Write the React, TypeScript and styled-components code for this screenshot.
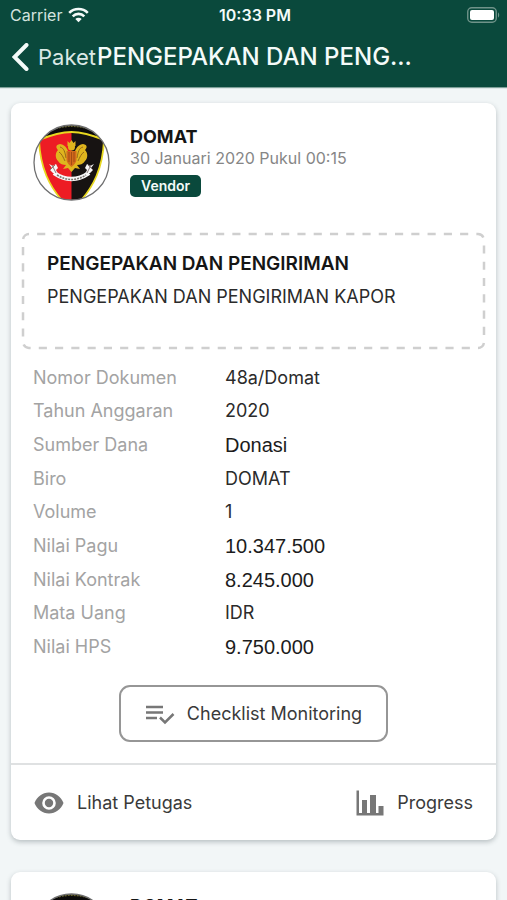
import React from "react";
import styled, { createGlobalStyle } from "styled-components";

const GlobalStyle = createGlobalStyle`
  *, *::before, *::after { box-sizing: border-box; }
  body {
    margin: 0;
    background: #f2f6f7;
    color: #2b2b2b;
    font-family: Inter, "Liberation Sans", sans-serif;
  }
`;

const Screen = styled.div`
  display: flex;
  flex-direction: column;
  height: 100vh;
  overflow: hidden;
`;

const Header = styled.header`
  flex: none;
  background: #0a493c;
  color: #f4fbf9;
  box-shadow: 0 1px 1px rgba(10, 73, 60, 0.5);
`;

const StatusBar = styled.div`
  display: grid;
  grid-template-columns: 1fr auto 1fr;
  align-items: center;
  height: 29px;
  padding: 0 7px 0 10px;
  font-size: 16px;
  line-height: 20px;
`;

const Carrier = styled.span`
  display: flex;
  align-items: center;
  gap: 6px;
  color: #d3e3df;
`;

const Clock = styled.span`
  font-weight: 600;
`;

const BatterySlot = styled.span`
  display: flex;
  justify-content: flex-end;
`;

const NavBar = styled.nav`
  display: flex;
  align-items: center;
  gap: 1px;
  height: 58px;
  padding: 0 12px 2px;
`;

const BackButton = styled.button`
  display: flex;
  align-items: center;
  gap: 9px;
  flex: none;
  padding: 0;
  border: 0;
  background: none;
  color: #dbe9e6;
  font: inherit;
  font-size: 22px;
  line-height: 28px;
  cursor: pointer;
`;

const Title = styled.h1`
  margin: 0;
  min-width: 0;
  overflow: hidden;
  white-space: nowrap;
  font-size: 24px;
  line-height: 30px;
  font-weight: 500;
`;

const Feed = styled.main`
  flex: 1;
  min-height: 0;
  display: flex;
  flex-direction: column;
  gap: 32px;
  padding: 16px 11px;
  overflow-y: auto;
  scrollbar-width: none;
`;

const Card = styled.article`
  flex: none;
  border-radius: 9px;
  background: #fff;
  box-shadow: 0 2px 5px rgba(60, 75, 80, 0.32);
`;

const CardHead = styled.div`
  display: flex;
  gap: 20px;
  padding: 21px 22px 0;
`;

const Identity = styled.div`
  display: flex;
  flex-direction: column;
  align-items: flex-start;
  padding-top: 2px;
`;

const Name = styled.h2`
  margin: 0;
  color: #151515;
  font-size: 18px;
  line-height: 22px;
  font-weight: 700;
`;

const Stamp = styled.time`
  color: #868686;
  font-size: 16px;
  line-height: 20px;
`;

const Badge = styled.span`
  margin-top: 7px;
  padding: 0 11px;
  border-radius: 5px;
  background: #0a493c;
  color: #f4fbf9;
  font-size: 14px;
  line-height: 22px;
  font-weight: 600;
`;

const Summary = styled.section`
  position: relative;
  min-height: 116px;
  margin: 32px 11px 0;
  padding: 19px 25px;
`;

const DashedOutline = styled.svg`
  position: absolute;
  inset: 1px;
  width: calc(100% - 2px);
  height: calc(100% - 2px);
  overflow: visible;
  pointer-events: none;
`;

const SummaryTitle = styled.h3`
  margin: 0 0 9px;
  color: #151515;
  font-size: 19px;
  line-height: 24px;
  font-weight: 600;
`;

const SummaryText = styled.p`
  margin: 0;
  font-size: 18px;
  line-height: 24px;
`;

const Details = styled.table`
  width: 100%;
  height: 303px;
  margin-top: 12px;
  border-collapse: collapse;
  font-size: 18px;
  line-height: 24px;
`;

const Label = styled.th`
  width: 214px;
  padding: 0 0 0 22px;
  color: #a3a3a3;
  font-weight: 400;
  text-align: left;
`;

const Value = styled.td<{ $plain?: boolean }>`
  padding: 0;
  color: ${(p) => (p.$plain ? "#1c1c1c" : "#2b2b2b")};
  font-family: ${(p) => (p.$plain ? '"Liberation Sans", sans-serif' : "inherit")};
  font-size: ${(p) => (p.$plain ? "20px" : "18px")};
`;

const ChecklistButton = styled.button`
  display: flex;
  align-items: center;
  gap: 12px;
  height: 57px;
  margin: 21px auto;
  padding: 0 24px;
  border: 2px solid #969696;
  border-radius: 11px;
  background: #fff;
  color: #3a3a3a;
  font: inherit;
  font-size: 18px;
  line-height: 24px;
  cursor: pointer;
`;

const Actions = styled.footer`
  display: flex;
  justify-content: space-between;
  height: 77px;
  padding: 0 23px;
  border-top: 2px solid #dfe1e2;
`;

const ActionButton = styled.button`
  display: flex;
  align-items: center;
  gap: 13px;
  padding: 0;
  border: 0;
  background: none;
  color: #3a3a3a;
  font: inherit;
  font-size: 18px;
  line-height: 24px;
  cursor: pointer;
`;

const WifiIcon = () => (
  <svg width="21" height="16" viewBox="0 0 21 16" fill="none" stroke="#f4fbf9" strokeWidth="2.6" aria-hidden="true">
    <path d="M1.2 5.8a13.2 13.2 0 0 1 18.6 0" />
    <path d="M4.7 9.3a8.2 8.2 0 0 1 11.6 0" />
    <path d="M10.5 15.2 7.3 12a4.6 4.6 0 0 1 6.4 0z" fill="#f4fbf9" stroke="none" />
  </svg>
);

const BatteryIcon = () => (
  <svg width="33" height="16" viewBox="0 0 33 16" aria-hidden="true">
    <rect x=".75" y=".75" width="28.5" height="14.5" rx="4" fill="none" stroke="#6f9389" strokeWidth="1.4" />
    <rect x="3" y="3" width="24" height="10" rx="2" fill="#fff" />
    <path d="M31 5.5c1.6.6 1.6 4.4 0 5z" fill="#6f9389" />
  </svg>
);

const BackIcon = () => (
  <svg width="17" height="28" viewBox="0 0 17 28" fill="none" stroke="#f4fbf9" strokeWidth="4" aria-hidden="true">
    <path d="M14.5 2 2.5 14l12 12" strokeLinecap="round" strokeLinejoin="miter" />
  </svg>
);

const Crest = () => {
  const clip = React.useId();
  return (
    <svg width="77" height="77" viewBox="0 0 77 77" role="img" aria-label="DOMAT">
      <defs>
        <clipPath id={clip}>
          <circle cx="38.5" cy="38.5" r="37.5" />
        </clipPath>
      </defs>
      <g clipPath={`url(#${clip})`}>
        <rect width="77" height="77" fill="#fff" />
        <path d="M0 0h77v16H0z" fill="#0b0a0a" />
        <path d="M6 16C18 11 28 8 38.5 8S59 11 71 16C70 40 63 64 38.5 86 14 64 7 40 6 16z" fill="#ed1c24" />
        <path d="M38.5 8C49 8 59 11 71 16C70 40 63 64 38.5 86z" fill="#171312" />
        <path
          d="M6 16C18 11 28 8 38.5 8S59 11 71 16C70 40 63 64 38.5 86 14 64 7 40 6 16z"
          fill="none"
          stroke="#e8d820"
          strokeWidth="1.8"
        />
        <path d="M20 5Q38.5-1 57 5" fill="none" stroke="#66632d" strokeWidth="2" strokeDasharray="2 1" />
        <g fill="#dfb51e">
          <path d="M36 34c0-8-3-13-9-14-5 1-4 4-2 6-3 3-3 8 0 11 2 3 5 4 8 4l-3 4 5-1 3.500 4 3.500-4 5 1-3-4c3 0 6-1 8-4 3-3 3-8 0-11 2-2 3-5-2-6-6 1-9 6-9 14z" />
          <circle cx="38.500" cy="23" r="3.500" />
          <path d="M34.500 17l2 2 2-3 2 3 2-2v5h-8z" />
        </g>
        <path
          d="M27 23c4 1 5 5 6 11M26 28c3 2 4 5 6 9M50 23c-4 1-5 5-6 11M51 28c-3 2-4 5-6 9"
          fill="none"
          stroke="#96681a"
        />
        <path d="M33.500 27h10v8c0 4-3 6-5 8-2-2-5-4-5-8z" fill="#d26a1b" />
        <path d="M36 28v10M38.500 28v13M41 28v10" stroke="#a34b14" />
        <path d="M21 49Q38.500 61 56 49" fill="none" stroke="#f7f7f7" strokeWidth="4.500" />
        <path d="M24 51Q38.500 60 53 51" fill="none" stroke="#77716c" strokeWidth="1.500" strokeDasharray="2 1" />
        <path d="M16 40l4 2 3-2 2 4-2 2 2 4-5-1-3-3 2-2zM61 40l-4 2-3-2-2 4 2 2-2 4 5-1 3-3-2-2z" fill="#f7f7f7" />
        <path d="M19 41l4 8M22 41l-5 5M58 41l-4 8M55 41l5 5" stroke="#897a78" />
      </g>
      <circle cx="38.5" cy="38.5" r="37.5" fill="none" stroke="#6f6f70" strokeWidth="1.3" />
    </svg>
  );
};

const ChecklistIcon = () => (
  <svg width="30" height="24" viewBox="0 0 30 24" fill="none" stroke="#777" strokeWidth="2.5" aria-hidden="true">
    <path d="M1 5h17M1 10.500h17M1 16h11" />
    <path d="M15 15.500l5 5L28.500 12" />
  </svg>
);

const EyeIcon = () => (
  <svg width="30" height="22" viewBox="0 0 30 22" aria-hidden="true">
    <path
      fillRule="evenodd"
      fill="#777"
      d="M15 .5C8.400.5 2.900 4.800.5 11 2.900 17.200 8.400 21.500 15 21.500S27.100 17.200 29.500 11C27.100 4.800 21.600.5 15 .5zM15 17.800a6.800 6.800 0 1 1 0-13.600 6.800 6.800 0 0 1 0 13.600zM15 6.800a4.200 4.200 0 1 0 0 8.400 4.200 4.200 0 0 0 0-8.400z"
    />
  </svg>
);

const ChartIcon = () => (
  <svg width="28" height="26" viewBox="0 0 28 26" fill="#777" aria-hidden="true">
    <path d="M.5.5H3V23h3V10h5v13h3V5h6v18h2.500v-7H27.500v9.500H.5z" />
  </svg>
);

type Detail = { label: string; value: string; plain?: boolean };

const details: Detail[] = [
  { label: "Nomor Dokumen", value: "48a/Domat" },
  { label: "Tahun Anggaran", value: "2020" },
  { label: "Sumber Dana", value: "Donasi", plain: true },
  { label: "Biro", value: "DOMAT" },
  { label: "Volume", value: "1" },
  { label: "Nilai Pagu", value: "10.347.500", plain: true },
  { label: "Nilai Kontrak", value: "8.245.000", plain: true },
  { label: "Mata Uang", value: "IDR" },
  { label: "Nilai HPS", value: "9.750.000", plain: true },
];

const PackageCard = () => (
  <Card>
    <CardHead>
      <Crest />
      <Identity>
        <Name>DOMAT</Name>
        <Stamp dateTime="2020-01-30T00:15">30 Januari 2020 Pukul 00:15</Stamp>
        <Badge>Vendor</Badge>
      </Identity>
    </CardHead>
    <Summary>
      <DashedOutline aria-hidden="true">
        <rect
          width="100%"
          height="100%"
          rx="6"
          fill="none"
          stroke="#cfcfcf"
          strokeWidth="2.5"
          pathLength={1120}
          strokeDasharray="8 8"
          strokeDashoffset="8"
        />
      </DashedOutline>
      <SummaryTitle>PENGEPAKAN DAN PENGIRIMAN</SummaryTitle>
      <SummaryText>PENGEPAKAN DAN PENGIRIMAN KAPOR</SummaryText>
    </Summary>
    <Details>
      <tbody>
        {details.map((d) => (
          <tr key={d.label}>
            <Label scope="row">{d.label}</Label>
            <Value $plain={d.plain}>{d.value}</Value>
          </tr>
        ))}
      </tbody>
    </Details>
    <ChecklistButton type="button">
      <ChecklistIcon />
      Checklist Monitoring
    </ChecklistButton>
    <Actions>
      <ActionButton type="button">
        <EyeIcon />
        Lihat Petugas
      </ActionButton>
      <ActionButton type="button">
        <ChartIcon />
        Progress
      </ActionButton>
    </Actions>
  </Card>
);

export default function App() {
  return (
    <Screen>
      <GlobalStyle />
      <Header>
        <StatusBar>
          <Carrier>
            Carrier
            <WifiIcon />
          </Carrier>
          <Clock>10:33 PM</Clock>
          <BatterySlot>
            <BatteryIcon />
          </BatterySlot>
        </StatusBar>
        <NavBar>
          <BackButton type="button">
            <BackIcon />
            Paket
          </BackButton>
          <Title>PENGEPAKAN DAN PENG...</Title>
        </NavBar>
      </Header>
      <Feed>
        <PackageCard />
        <PackageCard />
      </Feed>
    </Screen>
  );
}
